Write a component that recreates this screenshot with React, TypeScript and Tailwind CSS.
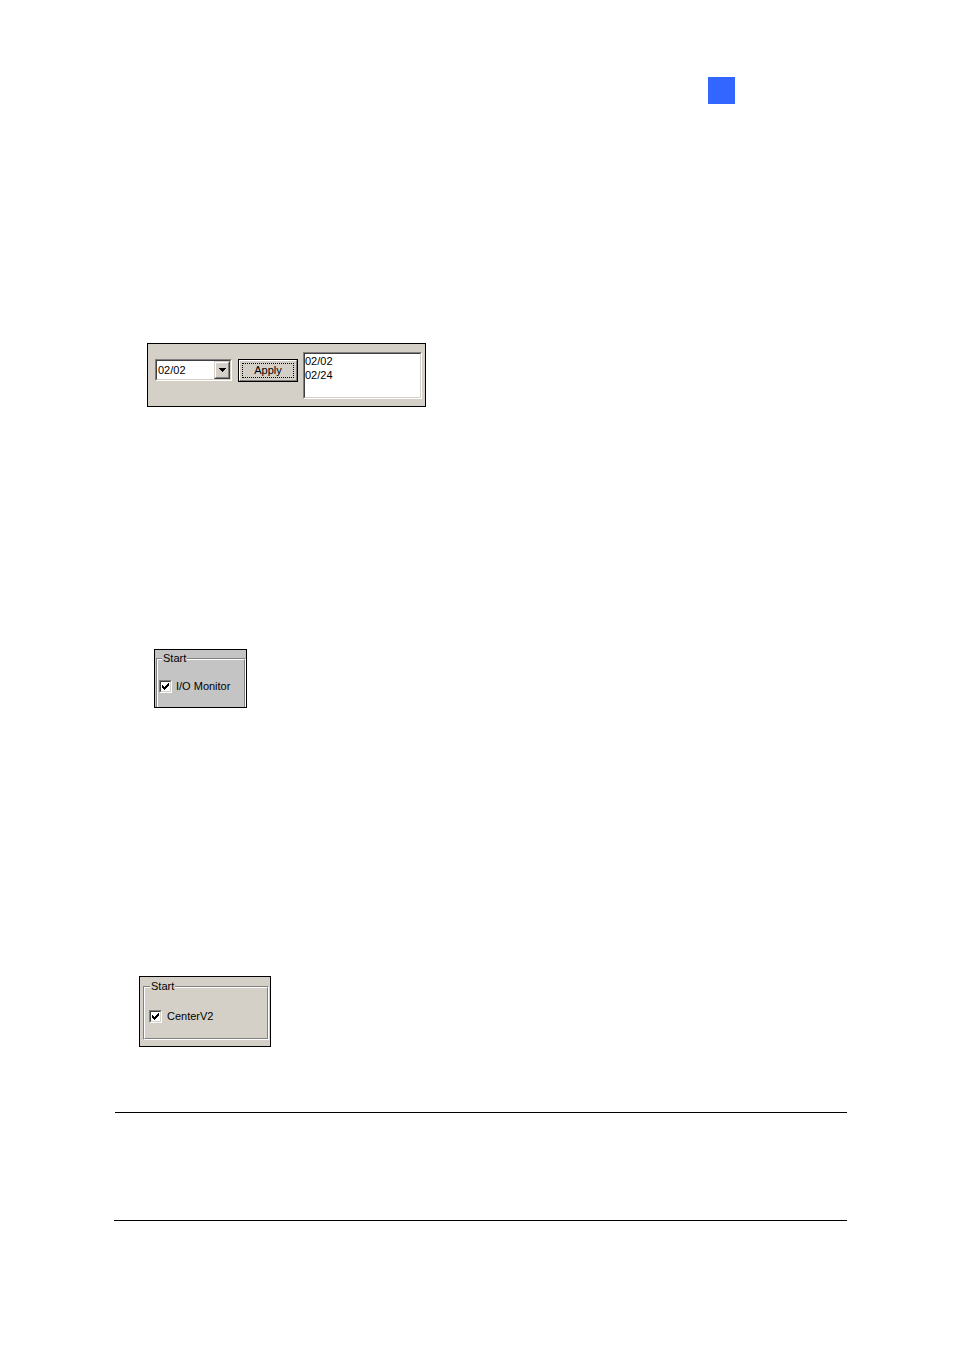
import React from 'react';

const font = { fontFamily: '"Liberation Sans", Arial, sans-serif' };

// classic win32 check glyph, row by row: [y, xStart, xEnd]
const checkRows: [number, number, number][] = [
  [0, 6, 6],
  [1, 5, 6],
  [2, 0, 0],
  [2, 4, 6],
  [3, 0, 1],
  [3, 3, 5],
  [4, 0, 4],
  [5, 1, 3],
  [6, 2, 2],
];

const CheckBox: React.FC = () => (
  <div className="w-[13px] h-[13px] shrink-0 border border-t-[#808080] border-l-[#808080] border-b-white border-r-white">
    <div className="w-full h-full border border-t-[#404040] border-l-[#404040] border-b-[#d4d0c8] border-r-[#d4d0c8] bg-white">
      <svg width="9" height="9" viewBox="0 0 9 9" className="block">
        {checkRows.map(([y, a, b], i) => (
          <rect key={i} x={a + 1} y={y + 1} width={b - a + 1} height={1} fill="#000" />
        ))}
      </svg>
    </div>
  </div>
);

const Sunken: React.FC<{ className?: string; children?: React.ReactNode }> = ({ className = '', children }) => (
  <div className={`border border-t-[#808080] border-l-[#808080] border-b-white border-r-white ${className}`}>
    <div className="w-full h-full border border-t-[#404040] border-l-[#404040] border-b-[#d4d0c8] border-r-[#d4d0c8] bg-white flex">
      {children}
    </div>
  </div>
);

const DateBar: React.FC = () => (
  <div className="ml-[147px] mt-[239px] w-[279px] h-[64px] border border-black bg-[#d4d0c8] flex items-start pl-[7px]">
    {/* combo box */}
    <Sunken className="mt-[15px] w-[77px] h-[22px]">
      <div className="flex-1 text-[11px] leading-[18px] text-black pl-[1px]">02/02</div>
      <div className="w-[16px] h-full border border-t-[#d4d0c8] border-l-[#d4d0c8] border-b-[#404040] border-r-[#404040] bg-[#d4d0c8]">
        <div className="w-full h-full border border-t-white border-l-white border-b-[#808080] border-r-[#808080] flex items-center justify-center">
          <svg width="7" height="4" viewBox="0 0 7 4" className="block">
            <path d="M0 0h7v1H0zM1 1h5v1H1zM2 2h3v1H2zM3 3h1v1H3z" fill="#000" />
          </svg>
        </div>
      </div>
    </Sunken>

    {/* default button */}
    <div className="mt-[15px] ml-[6px] w-[60px] h-[23px] border border-black bg-[#d4d0c8]">
      <div className="w-full h-full border border-t-white border-l-white border-b-[#808080] border-r-[#808080] p-[2px]">
        <div className="w-full h-full border border-dotted border-black flex items-center justify-center text-[11px] text-black leading-none">
          Apply
        </div>
      </div>
    </div>

    {/* list box */}
    <Sunken className="mt-[8px] ml-[5px] w-[119px] h-[47px]">
      <div className="flex flex-col text-[11px] leading-[14px] text-black">
        <span>02/02</span>
        <span>02/24</span>
      </div>
    </Sunken>
  </div>
);

const MonitorBox: React.FC = () => (
  <div className="ml-[154px] mt-[242px] w-[93px] h-[59px] border border-black bg-[#c4c4c4] pt-[8px] pl-[1px] flex">
    <div className="flex-1 border border-b-0 border-t-[#808080] border-l-[#808080] border-r-white">
      <div className="h-full border border-b-0 border-t-white border-l-white border-r-[#808080] flex flex-col items-start">
        <span className="ml-[4px] -mt-[8px] px-[1px] bg-[#c4c4c4] text-[11px] leading-[13px] text-black">Start</span>
        <div className="mt-[15px] ml-[1px] flex items-center gap-[4px]">
          <CheckBox />
          <span className="text-[11px] leading-[13px] text-black">I/O Monitor</span>
        </div>
      </div>
    </div>
  </div>
);

const CenterBox: React.FC = () => (
  <div className="ml-[139px] mt-[268px] w-[132px] h-[71px] border border-black bg-[#d4d0c8] pt-[9px] pl-[3px] pr-[1px] pb-[6px] flex">
    <div className="flex-1 border border-t-[#808080] border-l-[#808080] border-b-white border-r-white">
      <div className="h-full border border-t-white border-l-white border-b-[#808080] border-r-[#808080] flex flex-col items-start">
        <span className="ml-[5px] -mt-[8px] px-[1px] bg-[#d4d0c8] text-[11px] leading-[13px] text-black">Start</span>
        <div className="mt-[17px] ml-[4px] flex items-center gap-[5px]">
          <CheckBox />
          <span className="text-[11px] leading-[13px] text-black">CenterV2</span>
        </div>
      </div>
    </div>
  </div>
);

export default function App() {
  return (
    <div className="w-[954px] h-[1350px] bg-white flex flex-col items-start" style={font}>
      <div className="ml-[708px] mt-[77px] w-[27px] h-[27px] bg-[#3366ff]" />
      <DateBar />
      <MonitorBox />
      <CenterBox />
      <div className="ml-[115px] mt-[65px] w-[732px] h-px bg-black" />
      <div className="ml-[114px] mt-[107px] w-[733px] h-px bg-black" />
    </div>
  );
}
